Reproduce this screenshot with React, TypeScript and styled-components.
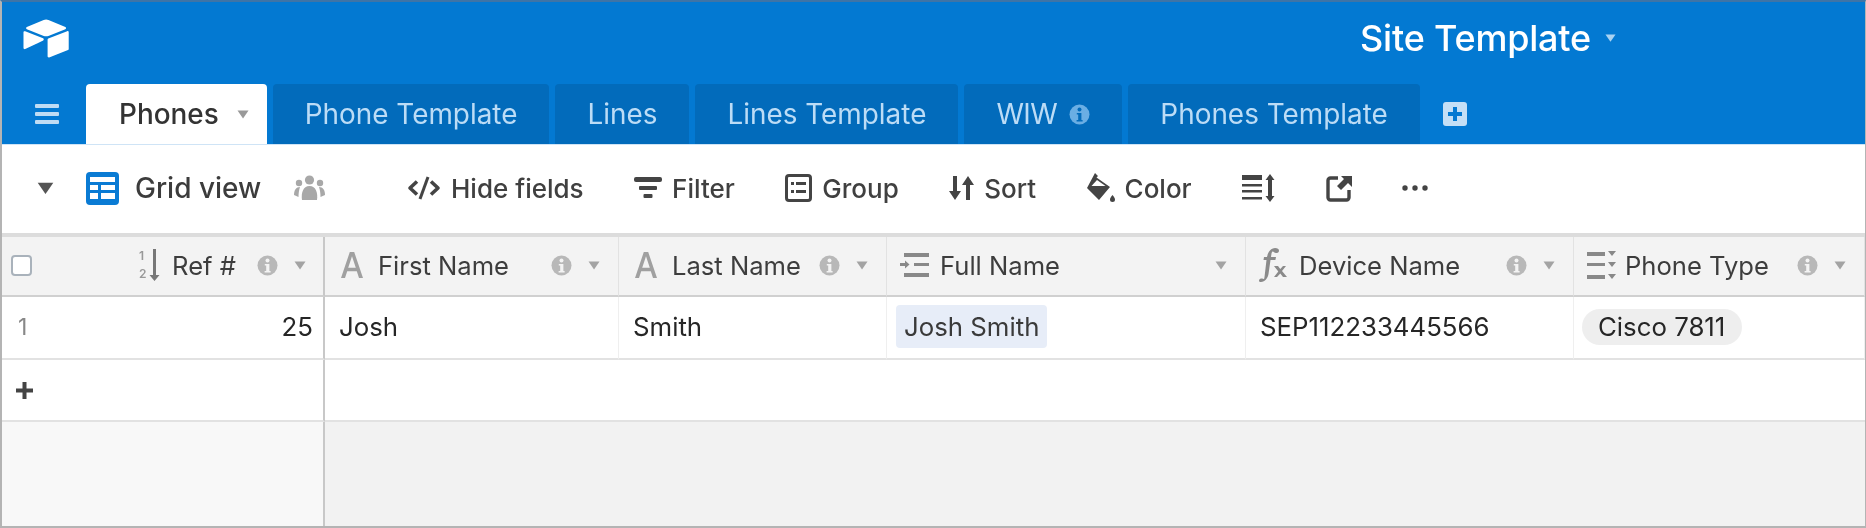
import React from 'react'
import styled, { createGlobalStyle } from 'styled-components'

const GlobalStyle = createGlobalStyle`
  html, body { margin: 0; padding: 0; background: #fff; }
  body { font-family: Inter, "Liberation Sans", sans-serif; -webkit-font-smoothing: antialiased; }
`

const Caret = ({ size = 12, color = '#a3a3a3' }: { size?: number; color?: string }) => (
  <svg width={size} height={size * 0.75} viewBox="0 0 12 9">
    <path d="M0.5 0.5h11L6 8.5z" fill={color} />
  </svg>
)

const InfoIcon = ({ color = '#b8b8b8', dot = '#f3f3f3' }: { color?: string; dot?: string }) => (
  <svg width="21" height="21" viewBox="0 0 21 21">
    <circle cx="10.5" cy="10.5" r="10" fill={color} />
    <circle cx="10.5" cy="5.6" r="2" fill={dot} />
    <path d="M7.8 9h4.6v7h1.2v1.6H7.6V16h1.6v-5.4H7.8z" fill={dot} />
  </svg>
)

const Logo = () => (
  <svg width="46" height="39" viewBox="10 9 178 149" fill="#fff">
    <path d="M90.04 12.37 24.79 39.37c-3.63 1.5-3.59 6.66.06 8.11l65.53 25.99a24.3 24.3 0 0 0 17.92 0l65.53-25.99c3.65-1.45 3.69-6.61.06-8.11l-65.25-27a24.3 24.3 0 0 0-18.6 0" />
    <path d="M105.15 87.65v64.92c0 3.09 3.11 5.2 5.98 4.06l73.02-28.34a4.37 4.37 0 0 0 2.76-4.06V59.31c0-3.09-3.11-5.2-5.98-4.06l-73.02 28.34a4.37 4.37 0 0 0-2.76 4.06" />
    <path d="M88.1 91 66.43 101.46l-2.2 1.06-45.74 21.92c-2.9 1.4-6.6-.71-6.6-3.93V59.6c0-1.17.6-2.18 1.4-2.94.33-.33.71-.6 1.1-.82 1.1-.66 2.66-.83 3.98-.31l69.36 27.48c3.53 1.4 3.8 6.34.38 7.99" />
  </svg>
)

const Hamburger = () => (
  <svg width="24" height="20" viewBox="0 0 24 20" fill="#bfdcf4">
    <rect y="0" width="24" height="4" rx="1" />
    <rect y="8" width="24" height="4" rx="1" />
    <rect y="16" width="24" height="4" rx="1" />
  </svg>
)

const AddTableIcon = () => (
  <svg width="24" height="24" viewBox="0 0 24 24">
    <rect width="24" height="24" rx="3" fill="#c4dff6" />
    <path d="M10 5h4v5h5v4h-5v5h-4v-5H5v-4h5z" fill="#0379d2" />
  </svg>
)

const GridIcon = () => (
  <svg width="33" height="33" viewBox="0 0 33 33">
    <rect width="33" height="33" rx="4" fill="#0a7bd4" />
    <rect x="4" y="5" width="25" height="5" fill="#fff" />
    <rect x="4" y="13" width="8" height="5" fill="#fff" />
    <rect x="15" y="13" width="14" height="5" fill="#fff" />
    <rect x="4" y="21" width="8" height="6" fill="#fff" />
    <rect x="15" y="21" width="14" height="6" fill="#fff" />
  </svg>
)

const PeopleIcon = () => (
  <svg width="33" height="26" viewBox="0 0 33 26" fill="#a8a8a8">
    <circle cx="16.5" cy="5" r="4.6" />
    <circle cx="6" cy="8" r="3.2" />
    <circle cx="27" cy="8" r="3.2" />
    <path d="M9 25c-1-7 1-14 7.5-14S25 18 24 25z" />
    <path d="M1 20c0-5 2-8 6-8-1 3-1.500 6-1.500 10zM32 20c0-5-2-8-6-8 1 3 1.500 6 1.500 10z" />
  </svg>
)

const HideIcon = () => (
  <svg width="34" height="24" viewBox="0 0 34 24" fill="none" stroke="#444" strokeWidth="3.6" strokeLinejoin="round">
    <path d="M10 5.500 3 12l7 6.500" />
    <path d="M24 5.500 31 12l-7 6.500" />
    <path d="M21 1 13 23" strokeWidth="3" />
  </svg>
)

const FilterIcon = () => (
  <svg width="28" height="24" viewBox="0 0 28 24" fill="#444">
    <rect x="0" y="1" width="28" height="5" rx="2" />
    <rect x="5" y="10" width="18" height="4" rx="1" />
    <rect x="9.500" y="18" width="9" height="4" rx="1" />
  </svg>
)

const GroupIcon = () => (
  <svg width="27" height="28" viewBox="0 0 27 28" fill="none">
    <rect x="1.500" y="1.500" width="24" height="25" rx="2.500" stroke="#444" strokeWidth="3" />
    <g fill="#444">
      <rect x="6" y="8" width="3" height="3" />
      <rect x="11" y="8" width="10" height="3" />
      <rect x="6" y="16" width="3" height="3" />
      <rect x="11" y="16" width="10" height="3" />
    </g>
  </svg>
)

const SortIcon = () => (
  <svg width="25" height="26" viewBox="0 0 25 26" fill="#444">
    <path d="M4 1h4v15h4L6 25 0 16h4z" />
    <path d="M17 25h4V10h4L19 1l-6 9h4z" />
  </svg>
)

const ColorIcon = () => (
  <svg width="28" height="30" viewBox="0 0 28 30" fill="#444">
    <path d="M8 0l3 3-1.500 1.500L23 14 12 27 0 15z" />
    <path d="M10 7 4.500 13h14z" fill="#fff" />
    <path d="M25.500 22c1.500 2 2.500 3 2.500 4.500a2.500 2.500 0 0 1-5 0c0-1.500 1-2.500 2.500-4.500z" />
  </svg>
)

const RowHeightIcon = () => (
  <svg width="33" height="28" viewBox="0 0 33 28" fill="#444">
    <rect x="0" y="1" width="20" height="5" />
    <rect x="0" y="10" width="20" height="2.500" />
    <rect x="0" y="16" width="20" height="2.500" />
    <rect x="0" y="23" width="20" height="2.500" />
    <path d="M28 0l4.500 6H30v16h2.500L28 28l-4.500-6H26V6h-2.500z" />
  </svg>
)

const ShareIcon = () => (
  <svg width="26" height="27" viewBox="0 0 26 27" fill="none">
    <path d="M12 3H4.500A2.500 2.500 0 0 0 2 5.500v17A2.500 2.500 0 0 0 4.500 25h16a2.500 2.500 0 0 0 2.500-2.500V15" stroke="#444" strokeWidth="3.400" />
    <path d="M15 1h11v11l-4-4-7 7-4-4 7-7z" fill="#444" />
  </svg>
)

const DotsIcon = () => (
  <svg width="26" height="6" viewBox="0 0 26 6" fill="#444">
    <circle cx="3" cy="3" r="2.700" />
    <circle cx="13" cy="3" r="2.700" />
    <circle cx="23" cy="3" r="2.700" />
  </svg>
)

const NumberSortIcon = () => (
  <svg width="21" height="32" viewBox="0 0 21 32" fill="#999">
    <text x="0" y="11" fontSize="12" fontWeight="600" fontFamily="Inter, sans-serif">1</text>
    <text x="0" y="29" fontSize="12" fontWeight="600" fontFamily="Inter, sans-serif">2</text>
    <path d="M14 0h3v26h3.500l-5 6-5-6H14z" fill="#777" />
  </svg>
)

const TextIcon = () => (
  <svg width="22" height="26" viewBox="0 0 22 26" fill="#a0a0a0">
    <path d="M8.800 0h4.400l8.800 26h-4l-2.200-6.800H6.200L4 26H0zM7.200 15.800h7.600L11 4.200z" />
  </svg>
)

const LookupIcon = () => (
  <svg width="29" height="26" viewBox="0 0 29 26" fill="#888">
    <rect x="4" y="1" width="25" height="4" />
    <rect x="14" y="11" width="15" height="3" />
    <path d="M0 11h5V8.500l4.500 4-4.500 4V14H0z" />
    <rect x="4" y="21" width="25" height="4" />
  </svg>
)

const FormulaIcon = () => (
  <svg width="28" height="34" viewBox="0 0 28 34" fill="#8a8a8a">
    <path d="M16 0c2.500 0 4 1 4 2.500S19 5.500 17 5s-2.500-2-3.500-1.500S12.500 6 12 9h5l-.6 3H11.500L9.500 26c-.7 4-3.500 8-7.500 8-1.300 0-2-.5-2-1.500S1 30 3 30.500 5 32 5.500 29L7.500 12H4.500L5 9h3C9 4 12 0 16 0z" />
    <path d="M15 18h4l2.300 3L24 18h3l-4 5 5 6h-4l-2.700-3.500L18 29h-3l4.300-5.500z" />
  </svg>
)

const SelectIcon = () => (
  <svg width="29" height="30" viewBox="0 0 29 30" fill="#888">
    <rect x="0" y="2" width="18" height="4" />
    <rect x="0" y="13" width="18" height="3" />
    <rect x="0" y="25" width="18" height="4" />
    <path d="M21 1h8l-4 5zM21 12h8l-4 5zM21 24h8l-4 5z" />
  </svg>
)

const Frame = styled.div`
  box-sizing: border-box;
  width: 1866px;
  height: 528px;
  display: flex;
  flex-direction: column;
  border: 2px solid #b4b4b4;
  border-top-color: #3f74a6;
  border-right-width: 1px;
  overflow: hidden;
  background: #fff;
  filter: blur(0.5px);
`

const Header = styled.header`
  height: 142px;
  flex: none;
  display: flex;
  flex-direction: column;
  background: #0379d2;
  border-bottom: 1px solid #cfe4f6;
`

const TitleBar = styled.div`
  height: 82px;
  flex: none;
  display: flex;
  align-items: center;
  padding: 0 0 10px 21px;
  box-sizing: border-box;
`

const Title = styled.button`
  margin-left: 1291px;
  display: flex;
  align-items: center;
  gap: 14px;
  padding: 0;
  border: 0;
  background: none;
  color: #fff;
  font: 500 36px Inter, "Liberation Sans", sans-serif;
  letter-spacing: -0.2px;
`

const TabBar = styled.nav`
  flex: 1;
  display: flex;
  align-items: stretch;
  gap: 6px;
`

const MenuButton = styled.div`
  width: 78px;
  padding-left: 33px;
  box-sizing: border-box;
  display: flex;
  align-items: center;
`

const Tab = styled.div<{ $active?: boolean }>`
  display: flex;
  align-items: center;
  gap: 18px;
  padding: ${p => (p.$active ? '0 18px 0 33px' : '0 32px')};
  border-radius: 4px 4px 0 0;
  background: ${p => (p.$active ? '#fff' : '#026bbb')};
  color: ${p => (p.$active ? '#333' : '#bcdcf6')};
  font-size: 27.9px;
  font-weight: ${p => (p.$active ? 500 : 400)};
  white-space: nowrap;
`

const CondensedLabel = styled.span`
  letter-spacing: -0.5px;
`

const TabInfo = styled.span`
  display: flex;
  margin-left: -6px;
`

const AddTab = styled.div`
  display: flex;
  align-items: center;
  margin-left: 17px;
`

const Toolbar = styled.div`
  height: 92px;
  flex: none;
  display: flex;
  align-items: center;
  box-sizing: border-box;
  padding: 0 0 2px 35px;
  border-bottom: 4px solid #dcdcdc;
`

const ViewPicker = styled.div`
  display: flex;
  align-items: center;
  width: 370px;
  flex: none;
`

const ViewName = styled.span`
  margin: 0 32px 0 16px;
  font-size: 28px;
  font-weight: 500;
  color: #3c3c3c;
`

const ViewCaret = styled.span`
  display: flex;
  margin-right: 32px;
`

const ToolGroup = styled.div`
  display: flex;
  align-items: center;
  gap: 50.5px;
`

const Tool = styled.div`
  display: flex;
  align-items: center;
  gap: 10px;
  color: #404040;
  font-size: 26px;
  font-weight: 500;
  white-space: nowrap;
`

const Table = styled.div`
  flex: 1;
  display: grid;
  grid-template-columns: 323px 294px 268px 359px 328px 1fr;
  grid-template-rows: 60px 63px 62px 1fr;
`

const HeadCell = styled.div<{ $first?: boolean }>`
  display: flex;
  align-items: center;
  box-sizing: border-box;
  background: #f3f3f3;
  border-bottom: 2px solid #d0d0d0;
  border-right: ${p => (p.$first ? '2px solid #c8c8c8' : '1px solid #e2e2e2')};
  padding: ${p => (p.$first ? '0 17px 2px 9px' : '0 18px 2px 16px')};
  color: #3d3d3d;
  font-size: 25.6px;
  font-weight: 400;
`

const HeadIcon = styled.span<{ $shift?: number }>`
  display: flex;
  margin-left: ${p => p.$shift || 0}px;
`

const HeadName = styled.span<{ $gap?: number; $fixed?: boolean }>`
  margin-left: ${p => p.$gap ?? 16}px;
  margin-right: ${p => (p.$fixed ? '21px' : 'auto')};
  white-space: nowrap;
`

const HeadInfo = styled.span`
  display: flex;
  margin-right: 16px;
`

const Checkbox = styled.span`
  width: 21px;
  height: 21px;
  box-sizing: border-box;
  background: #fff;
  border: 2px solid #a9b2bb;
  border-radius: 4px;
  margin-right: auto;
`

const Cell = styled.div`
  display: flex;
  align-items: center;
  box-sizing: border-box;
  background: #fff;
  border-bottom: 2px solid #e2e2e2;
  border-right: 1px solid #efefef;
  padding: 0 14px 2px;
  font-size: 25.8px;
  color: #262626;
  white-space: nowrap;
`

const RowNumber = styled(Cell)`
  justify-content: space-between;
  padding: 0 10px 2px 16px;
  border-right: 2px solid #c8c8c8;
`

const RowIndex = styled.span`
  color: #888;
  font-size: 23px;
`

const FullPill = styled.span`
  padding: 0 8px;
  height: 43px;
  margin-left: -5px;
  display: flex;
  align-items: center;
  border-radius: 4px;
  background: #e7edf8;
  color: #3a3a3a;
`

const SelectPill = styled.span`
  padding: 0 17px 0 16px;
  height: 36px;
  margin-left: -6px;
  display: flex;
  align-items: center;
  border-radius: 18px;
  background: #eeeeee;
  color: #262626;
`

const AddCell = styled.div`
  display: flex;
  align-items: center;
  box-sizing: border-box;
  padding-left: 14px;
  background: #fff;
  border-bottom: 2px solid #e2e2e2;
  border-right: 2px solid #c8c8c8;
`

const AddBlank = styled.div`
  grid-column: 2 / -1;
  background: #fff;
  border-bottom: 2px solid #e2e2e2;
`

const EmptyLeft = styled.div`
  background: #f8f8f8;
  border-right: 2px solid #c8c8c8;
`

const EmptyRight = styled.div`
  grid-column: 2 / -1;
  background: #f2f2f2;
`

const tabs = ['Phone Template', 'Lines', 'Lines Template', 'WIW', 'Phones Template']
const tools = [
  { icon: <HideIcon />, label: 'Hide fields' },
  { icon: <FilterIcon />, label: 'Filter' },
  { icon: <GroupIcon />, label: 'Group' },
  { icon: <SortIcon />, label: 'Sort' },
  { icon: <ColorIcon />, label: 'Color' },
  { icon: <RowHeightIcon /> },
  { icon: <ShareIcon /> },
  { icon: <DotsIcon /> },
]
const columns = [
  { icon: <TextIcon />, name: 'First Name', info: true, shift: 0, gap: 15 },
  { icon: <TextIcon />, name: 'Last Name', info: true, shift: 0, gap: 15 },
  { icon: <LookupIcon />, name: 'Full Name', info: false, shift: -3, gap: 11 },
  { icon: <FormulaIcon />, name: 'Device Name', info: true, shift: -3, gap: 12 },
  { icon: <SelectIcon />, name: 'Phone Type', info: true, shift: -3, gap: 9 },
]

const App = () => {
  return (
    <Frame>
      <GlobalStyle />
      <Header>
        <TitleBar>
          <Logo />
          <Title>
            Site Template
            <Caret size={11} color="#a9d2f2" />
          </Title>
        </TitleBar>
        <TabBar>
          <MenuButton>
            <Hamburger />
          </MenuButton>
          <Tab $active>
            Phones
            <Caret size={12} color="#999" />
          </Tab>
          {tabs.map(tab =>
            tab === 'WIW' ? (
              <Tab key={tab}>
                <CondensedLabel>{tab}</CondensedLabel>
                <TabInfo>
                  <InfoIcon color="#6aaee4" dot="#026bbb" />
                </TabInfo>
              </Tab>
            ) : (
              <Tab key={tab}>{tab}</Tab>
            ),
          )}
          <AddTab>
            <AddTableIcon />
          </AddTab>
        </TabBar>
      </Header>
      <Toolbar>
        <ViewPicker>
          <ViewCaret>
            <Caret size={17} color="#555" />
          </ViewCaret>
          <GridIcon />
          <ViewName>Grid view</ViewName>
          <PeopleIcon />
        </ViewPicker>
        <ToolGroup>
          {tools.map((tool, i) => (
            <Tool key={i}>
              {tool.icon}
              {tool.label}
            </Tool>
          ))}
        </ToolGroup>
      </Toolbar>
      <Table>
        <HeadCell $first>
          <Checkbox />
          <NumberSortIcon />
          <HeadName $gap={12} $fixed>
            Ref #
          </HeadName>
          <HeadInfo>
            <InfoIcon />
          </HeadInfo>
          <Caret />
        </HeadCell>
        {columns.map(col => (
          <HeadCell key={col.name}>
            <HeadIcon $shift={col.shift}>{col.icon}</HeadIcon>
            <HeadName $gap={col.gap}>{col.name}</HeadName>
            {col.info && (
              <HeadInfo>
                <InfoIcon />
              </HeadInfo>
            )}
            <Caret />
          </HeadCell>
        ))}
        <RowNumber>
          <RowIndex>1</RowIndex>
          25
        </RowNumber>
        <Cell>Josh</Cell>
        <Cell>Smith</Cell>
        <Cell>
          <FullPill>Josh Smith</FullPill>
        </Cell>
        <Cell>SEP112233445566</Cell>
        <Cell>
          <SelectPill>Cisco 7811</SelectPill>
        </Cell>
        <AddCell>
          <svg width="17" height="17" viewBox="0 0 17 17" fill="#444">
            <path d="M6.500 0h4v6.500H17v4h-6.500V17h-4v-6.500H0v-4h6.500z" />
          </svg>
        </AddCell>
        <AddBlank />
        <EmptyLeft />
        <EmptyRight />
      </Table>
    </Frame>
  )
}

export default App
